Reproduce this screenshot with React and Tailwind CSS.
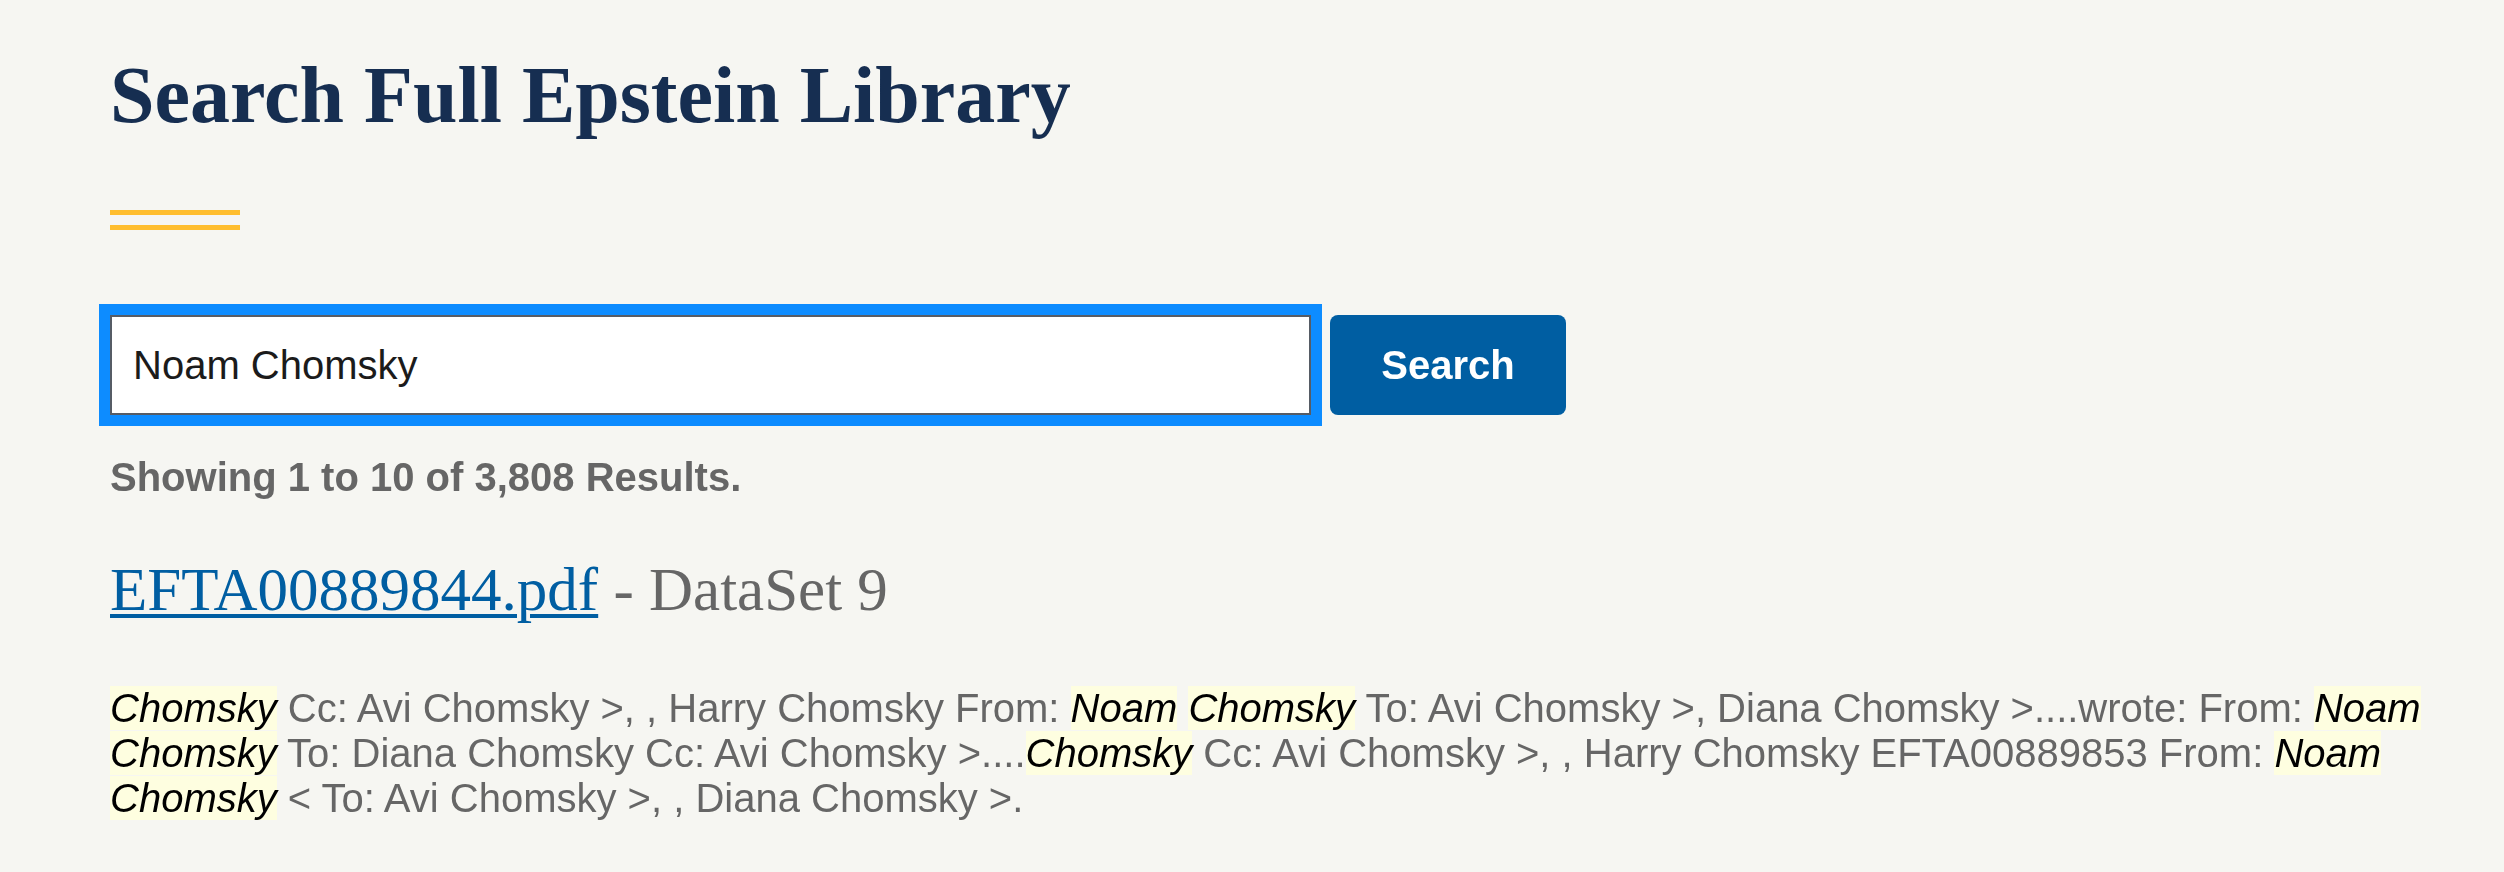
import React, { useEffect, useRef } from 'react';

const SNIPPET = [
  { hl: true, t: 'Chomsky' },
  { t: ' Cc: Avi Chomsky >, , Harry Chomsky From: ' },
  { hl: true, t: 'Noam' },
  { t: ' ' },
  { hl: true, t: 'Chomsky' },
  { t: ' To: Avi Chomsky >, Diana Chomsky >....wrote: From: ' },
  { hl: true, t: 'Noam' },
  { t: ' ' },
  { hl: true, t: 'Chomsky' },
  { t: ' To: Diana Chomsky Cc: Avi Chomsky >....' },
  { hl: true, t: 'Chomsky' },
  { t: ' Cc: Avi Chomsky >, , Harry Chomsky EFTA00889853 From: ' },
  { hl: true, t: 'Noam' },
  { t: ' ' },
  { hl: true, t: 'Chomsky' },
  { t: ' < To: Avi Chomsky >, , Diana Chomsky >.' },
];

const App = () => {
  const inputRef = useRef(null);

  useEffect(() => {
    const el = inputRef.current;
    if (el) {
      el.focus();
      el.setSelectionRange(el.value.length, el.value.length);
    }
  }, []);

  return (
    <div className="min-h-screen bg-[#f6f6f2] pl-[110px] pt-[47px] font-['Liberation_Sans',Arial,sans-serif]">
      <div className="w-[2340px]">
        {/* heading */}
        <h1 className="font-['Liberation_Serif','Times_New_Roman',serif] text-[80px] leading-[96px] font-bold text-[#162e51]">
          Search Full Epstein Library
        </h1>
        <div className="mt-[67px] flex flex-col gap-[10px]">
          <div className="h-[5px] w-[130px] bg-[#ffbe2e]"></div>
          <div className="h-[5px] w-[130px] bg-[#ffbe2e]"></div>
        </div>

        {/* search form */}
        <form className="mt-[85px] flex items-center gap-[19px]" onSubmit={(e) => e.preventDefault()}>
          <input
            ref={inputRef}
            type="text"
            defaultValue="Noam Chomsky"
            className="h-[100px] w-[1201px] border-2 border-[#565c65] bg-white pl-[21px] text-[40px] text-[#1b1b1b] caret-[#1b1b1b] outline-[11px] outline-solid outline-[#0d8cff] outline-offset-0"
          />
          <button
            type="submit"
            className="h-[100px] w-[236px] rounded-lg bg-[#005ea2] text-[40px] font-bold text-white"
          >
            Search
          </button>
        </form>

        <p className="mt-[38px] text-[40px] leading-[48px] font-bold text-[#666]">
          Showing 1 to 10 of 3,808 Results.
        </p>

        {/* result */}
        <h2 className="mt-[53px] font-['Liberation_Serif','Times_New_Roman',serif] text-[61px] leading-[72px] text-[#666]">
          <a href="#" className="text-[#005ea2] underline decoration-[4px] underline-offset-[4px]">
            EFTA00889844.pdf
          </a>{' '}
          - DataSet 9
        </h2>

        <p className="mt-[60px] text-[40px] leading-[45px] text-[#666]">
          {SNIPPET.map((s, i) =>
            s.hl ? (
              <mark key={i} className="bg-[#fefee0] italic text-black">
                {s.t}
              </mark>
            ) : (
              <span key={i}>{s.t}</span>
            )
          )}
        </p>
      </div>
    </div>
  );
};

export default App;
